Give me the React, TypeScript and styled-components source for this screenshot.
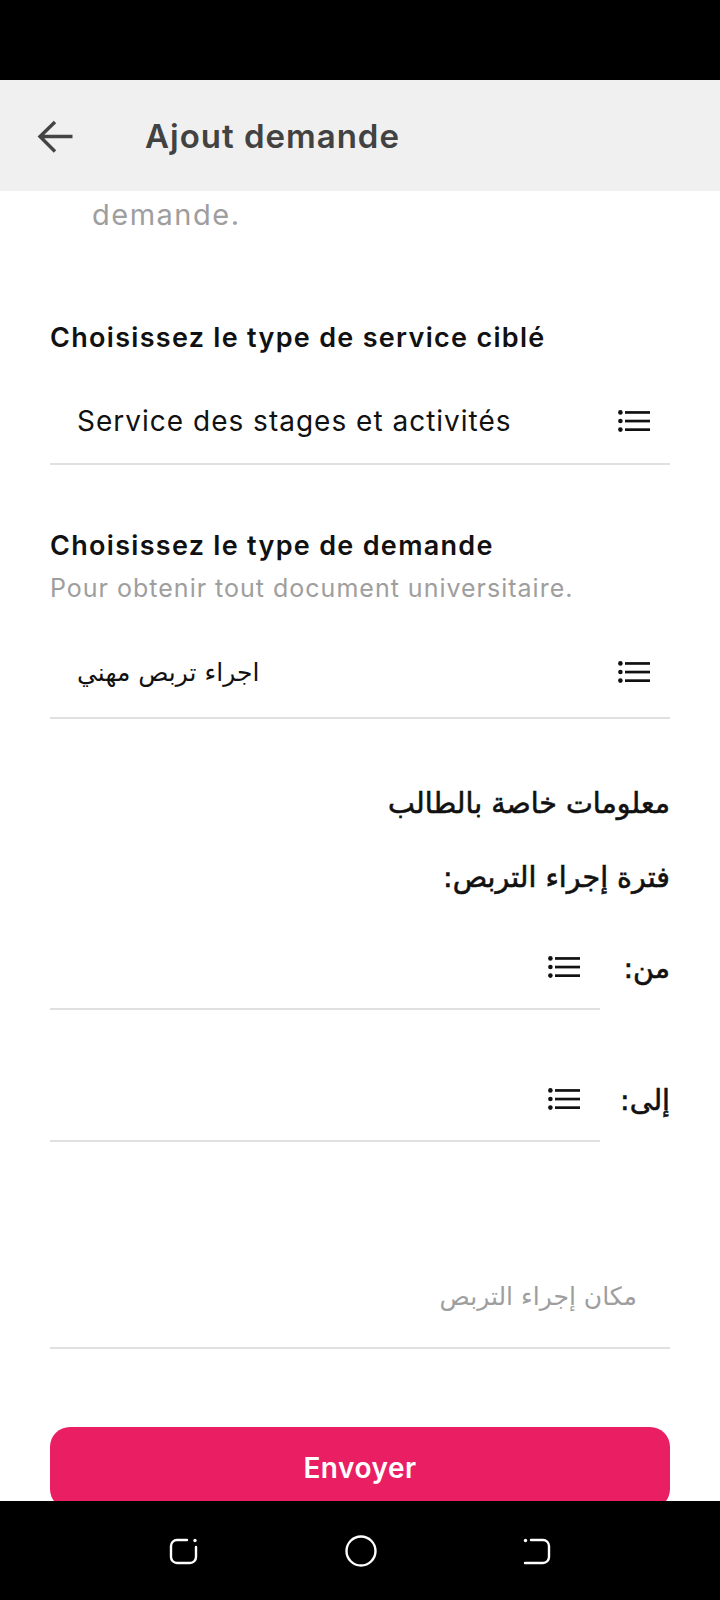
import styled, { createGlobalStyle } from "styled-components"

const GlobalStyle = createGlobalStyle`
    html, body {
        margin: 0;
        padding: 0;
        background: #fff;
    }
    body {
        font-family: Inter, "DejaVu Sans", sans-serif;
    }
`

const Screen = styled.div`
    width: 720px;
    height: 1600px;
    display: flex;
    flex-direction: column;
    overflow: hidden;
    background: #fff;
`

const StatusBar = styled.div`
    height: 80px;
    flex-shrink: 0;
    background: #000;
`

const Header = styled.header`
    height: 111px;
    flex-shrink: 0;
    box-sizing: border-box;
    padding-left: 37px;
    display: flex;
    align-items: center;
    background: #f0f0f0;
`

const BackButton = styled.button`
    border: 0;
    padding: 0;
    background: none;
    display: flex;
    margin-top: 2px;
`

const Title = styled.h1`
    margin: 0 0 0 71px;
    font-size: 33px;
    font-weight: 600;
    color: #424242;
    letter-spacing: 1px;
`

const Content = styled.main`
    flex: 1;
    min-height: 0;
    overflow: hidden;
    padding: 0 50px;
    display: flex;
    flex-direction: column;

    & > * {
        flex-shrink: 0;
    }
`

const Description = styled.p`
    margin: 0;
    padding-left: 42px;
    font-size: 29px;
    line-height: 48px;
    letter-spacing: 1.5px;
    color: #9e9e9e;
`

const Label = styled.h2<{ $top: number }>`
    margin: ${({ $top }) => $top}px 0 0;
    font-size: 27px;
    font-weight: 600;
    line-height: 36px;
    letter-spacing: 1.3px;
    color: #111;
`

const Hint = styled.p`
    margin: 7px 0 0;
    font-size: 25px;
    line-height: 34px;
    letter-spacing: 1px;
    color: #9e9e9e;
`

const Select = styled.div<{ $top: number; $height: number }>`
    margin-top: ${({ $top }) => $top}px;
    height: ${({ $height }) => $height}px;
    padding: 0 20px 0 27px;
    border-bottom: 2px solid #e0e0e0;
    display: flex;
    align-items: center;
    justify-content: space-between;
`

const SelectValue = styled.span<{ $arabic?: boolean }>`
    font-family: ${({ $arabic }) => ($arabic ? '"DejaVu Sans", sans-serif' : 'Inter, sans-serif')};
    font-size: ${({ $arabic }) => ($arabic ? 25 : 28)}px;
    letter-spacing: ${({ $arabic }) => ($arabic ? 0 : 1)}px;
    color: #111;
`

const ArabicTitle = styled.h3<{ $top: number }>`
    margin: ${({ $top }) => $top}px 0 0;
    direction: rtl;
    font-family: "DejaVu Sans", sans-serif;
    font-size: 28.5px;
    font-weight: 400;
    -webkit-text-stroke: 0.6px #111;
    line-height: 40px;
    color: #111;
`

const DateRow = styled.div<{ $top: number }>`
    margin-top: ${({ $top }) => $top}px;
    direction: rtl;
    display: flex;
    align-items: center;
`

const DateLabel = styled.span`
    width: 70px;
    font-family: "DejaVu Sans", sans-serif;
    font-size: 28.5px;
    -webkit-text-stroke: 0.6px #111;
    color: #111;
`

const DateField = styled.div`
    flex: 1;
    height: 82px;
    padding-inline-start: 20px;
    border-bottom: 2px solid #e0e0e0;
    display: flex;
    align-items: center;
`

const PlaceField = styled.div`
    margin-top: 103px;
    height: 102px;
    padding-inline-start: 33px;
    direction: rtl;
    border-bottom: 2px solid #e0e0e0;
    display: flex;
    align-items: center;
    font-family: "DejaVu Sans", sans-serif;
    font-size: 25px;
    color: #9e9e9e;
`

const SubmitButton = styled.button`
    margin-top: 78px;
    height: 82px;
    border: 0;
    border-radius: 20px;
    background: #ea1e63;
    color: #fff;
    font-family: Inter, sans-serif;
    font-size: 28px;
    font-weight: 600;
    letter-spacing: 0.5px;
`

const NavBar = styled.nav`
    height: 99px;
    flex-shrink: 0;
    background: #000;
    display: flex;
    align-items: center;
    justify-content: center;
    gap: 146px;
`

const ListIcon = () => (
    <svg width="32" height="22" viewBox="0 0 32 22">
        <g fill="#111">
            <circle cx="2.4" cy="2.4" r="2.3" />
            <circle cx="2.4" cy="11" r="2.3" />
            <circle cx="2.4" cy="19.6" r="2.3" />
            <rect x="7" y="1.1" width="25" height="2.7" />
            <rect x="7" y="9.7" width="25" height="2.7" />
            <rect x="7" y="18.3" width="25" height="2.7" />
        </g>
    </svg>
)

const ArrowBack = () => (
    <svg width="37" height="34" viewBox="0 0 37 34">
        <path
            d="M35.5 16.5H3M18 2L3 16.5L18 31.5"
            fill="none"
            stroke="#444"
            strokeWidth="3.4"
        />
    </svg>
)

const RecentsIcon = () => (
    <svg width="30" height="28" viewBox="0 0 30 28">
        <g fill="none" stroke="#fff" strokeWidth="2.4" strokeLinecap="round">
            <path d="M18 3H8A6 6 0 0 0 2 9V20A6 6 0 0 0 8 26H21A6 6 0 0 0 27 20V10" />
        </g>
        <circle cx="26" cy="3.5" r="1.7" fill="#fff" />
    </svg>
)

const HomeIcon = () => (
    <svg width="32" height="32" viewBox="0 0 32 32">
        <circle cx="16" cy="16" r="14.5" fill="none" stroke="#fff" strokeWidth="2.4" />
    </svg>
)

const BackIcon = () => (
    <svg width="28" height="28" viewBox="0 0 28 28">
        <g fill="none" stroke="#fff" strokeWidth="2.4" strokeLinecap="round">
            <path d="M8 3H20A6 6 0 0 1 26 9V20A6 6 0 0 1 20 26H2" />
        </g>
        <circle cx="2.5" cy="3.5" r="1.7" fill="#fff" />
    </svg>
)

export default function App() {
    return (
        <>
            <GlobalStyle />
            <Screen>
                <StatusBar />
                <Header>
                    <BackButton aria-label="Retour">
                        <ArrowBack />
                    </BackButton>
                    <Title>Ajout demande</Title>
                </Header>

                <Content>
                    <Description>demande.</Description>

                    <Label $top={81}>Choisissez le type de service ciblé</Label>
                    <Select $top={22} $height={85}>
                        <SelectValue>Service des stages et activités</SelectValue>
                        <ListIcon />
                    </Select>

                    <Label $top={63}>Choisissez le type de demande</Label>
                    <Hint>Pour obtenir tout document universitaire.</Hint>
                    <Select $top={22} $height={90}>
                        <SelectValue $arabic>اجراء تربص مهني</SelectValue>
                        <ListIcon />
                    </Select>

                    <ArabicTitle $top={65}>معلومات خاصة بالطالب</ArabicTitle>
                    <ArabicTitle $top={34}>فترة إجراء التربص:</ArabicTitle>

                    <DateRow $top={28}>
                        <DateLabel>من:</DateLabel>
                        <DateField>
                            <ListIcon />
                        </DateField>
                    </DateRow>
                    <DateRow $top={48}>
                        <DateLabel>إلى:</DateLabel>
                        <DateField>
                            <ListIcon />
                        </DateField>
                    </DateRow>

                    <PlaceField>مكان إجراء التربص</PlaceField>

                    <SubmitButton>Envoyer</SubmitButton>
                </Content>

                <NavBar>
                    <RecentsIcon />
                    <HomeIcon />
                    <BackIcon />
                </NavBar>
            </Screen>
        </>
    )
}
